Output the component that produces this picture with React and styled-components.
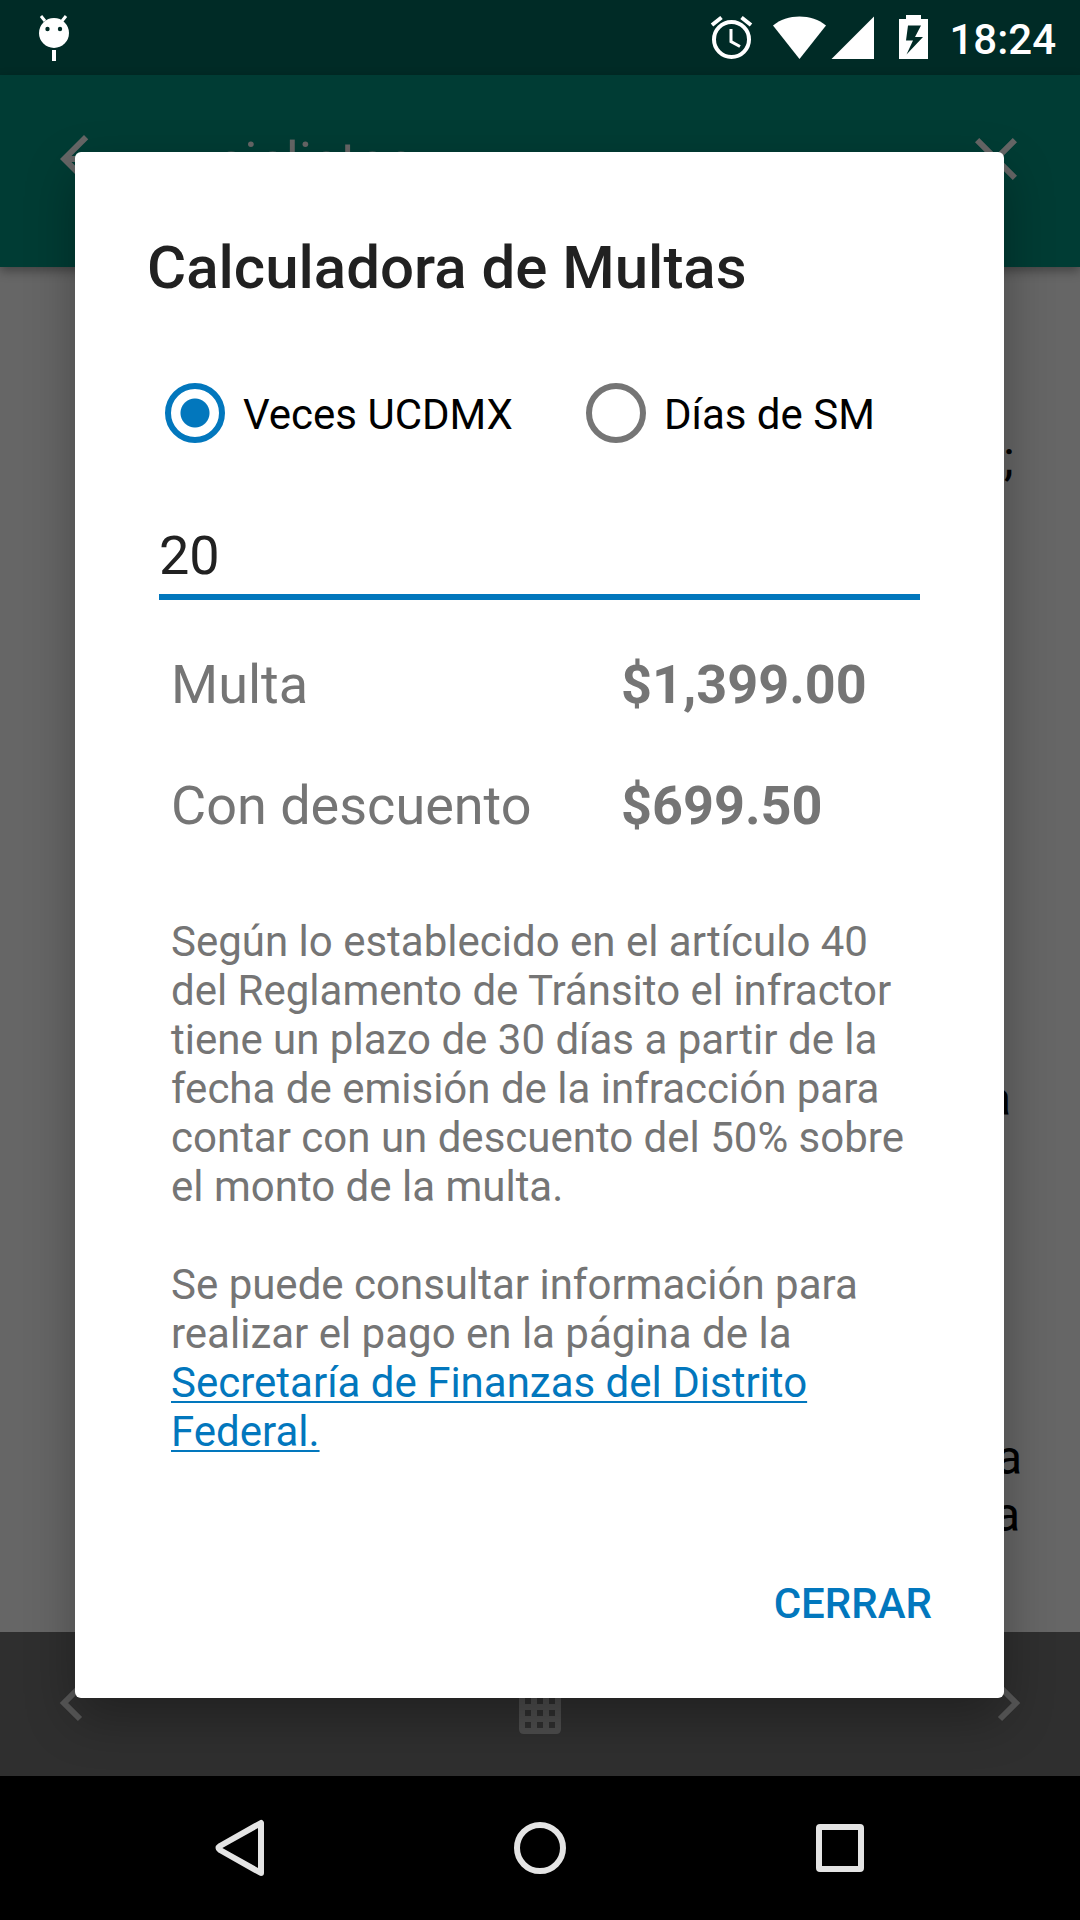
import React, { useState } from "react";
import styled, { createGlobalStyle } from "styled-components";

const Global = createGlobalStyle`
  *, *::before, *::after { box-sizing: border-box; }
  body { margin: 0; background: #000; }
  button, input { font: inherit; }
`;

const Screen = styled.div`
  position: relative;
  min-height: 100vh;
  display: flex;
  flex-direction: column;
  font-family: Roboto, "Noto Sans", sans-serif;
  font-size: 42px;
  line-height: 49px;
  color: #000;
`;

const StatusBar = styled.header`
  height: 75px;
  padding: 0 24px 0 36px;
  display: flex;
  align-items: center;
  justify-content: space-between;
  background: #002b26;
  color: #fff;
`;

const StatusIcons = styled.div`
  display: flex;
  align-items: center;
`;

const Glyph = styled.svg`
  display: block;
  flex: none;
`;

const Clock = styled.time`
  margin-left: 19px;
  padding-top: 4px;
  font-weight: 500;
`;

const AppBar = styled.div`
  height: 192px;
  padding: 0 48px;
  display: flex;
  align-items: center;
  gap: 96px;
  background: #003c34;
  box-shadow: 0 4px 10px rgba(0, 0, 0, 0.35);
  z-index: 1;
`;

const BarTitle = styled.h1`
  flex: 1;
  margin: 0;
  padding-bottom: 18px;
  font-size: 54px;
  font-weight: 400;
  line-height: 64px;
  color: #666;
`;

const IconButton = styled.button`
  padding: 0;
  border: 0;
  display: flex;
  background: none;
  color: #666;
`;

const BarButton = styled(IconButton)`
  margin-bottom: 24px;
`;

const Article = styled.main`
  flex: 1;
  padding: 163px 58px 0;
  background: #666;
  text-align: right;
  font-size: 48px;
  line-height: 57px;
`;

const Passage = styled.p`
  margin: 0 ${(p) => p.$inset}px ${(p) => p.$after}px 0;
`;

const BottomBar = styled.nav`
  height: 144px;
  padding: 0 46px;
  display: flex;
  align-items: center;
  justify-content: space-between;
  background: #2f2f2f;
`;

const SystemNav = styled.nav`
  height: 144px;
  padding: 0 90px;
  display: grid;
  grid-template-columns: repeat(3, 1fr);
  place-items: center;
  background: #000;
`;

const SystemButton = styled(IconButton)`
  color: #e4e4e4;
`;

const Dialog = styled.section`
  position: absolute;
  top: 152px;
  left: 75px;
  right: 76px;
  padding: 84px 72px 45px;
  display: flex;
  flex-direction: column;
  border-radius: 6px;
  background: #fff;
  box-shadow: 0 20px 50px rgba(0, 0, 0, 0.3);
  z-index: 2;
`;

const Title = styled.h2`
  margin: 0;
  font-size: 60px;
  font-weight: 500;
  line-height: 64px;
  color: #212121;
`;

const Form = styled.form`
  padding: 72px 12px 0;
  display: flex;
  flex-direction: column;
`;

const Choices = styled.div`
  padding-left: 6px;
  display: flex;
  gap: 73px;
`;

const Choice = styled.label`
  height: 84px;
  display: flex;
  align-items: center;
  gap: 18px;
`;

const Radio = styled.input`
  appearance: none;
  width: 60px;
  height: 60px;
  margin: 0 0 2px;
  border: 6px solid #757575;
  border-radius: 50%;

  &:checked {
    border-color: #0277bd;
    background: radial-gradient(circle, #0277bd 14px, transparent 15px);
  }
`;

const Amount = styled.input`
  width: 100%;
  height: 72px;
  margin-top: 72px;
  padding: 0 0 12px;
  border: 0;
  border-bottom: 6px solid #0277bd;
  border-radius: 0;
  outline: 0;
  background: none;
  font-size: 54px;
  color: #212121;
`;

const Results = styled.dl`
  margin: 0;
  padding: 53px 12px 0;
  display: grid;
  grid-template-columns: 450px 1fr;
  row-gap: 57px;
  font-size: 54px;
  line-height: 64px;
  color: #757575;
`;

const Term = styled.dt``;

const Value = styled.dd`
  margin: 0;
  font-weight: 700;
`;

const Note = styled.p`
  margin: 0;
  padding: ${(p) => (p.$first ? 79 : 49)}px 24px 0;
  color: #757575;
`;

const NoteLink = styled.a`
  color: #0277bd;
  text-decoration-thickness: 2px;
  text-underline-offset: 4px;
`;

const Actions = styled.div`
  padding-top: 97px;
  display: flex;
  justify-content: flex-end;
`;

const CloseButton = styled.button`
  height: 100px;
  padding: 0;
  border: 0;
  background: none;
  font-weight: 500;
  color: #0277bd;
`;

function Android() {
  return (
    <Glyph width="36" height="50" viewBox="0 -1 36 50" aria-hidden="true">
      <path d="M5 2l4 5M30 2l-4 5" stroke="#fff" strokeWidth="3" />
      <circle cx="18" cy="19" r="15" fill="#fff" />
      <circle cx="11.500" cy="15" r="2.200" fill="#002b26" />
      <circle cx="24" cy="15" r="2.200" fill="#002b26" />
      <path d="M16 36h4v11h-4z" fill="#fff" />
    </Glyph>
  );
}

function StatusGlyphs() {
  return (
    <Glyph width="220" height="46" viewBox="710 15 220 46" aria-hidden="true">
      <g fill="none" stroke="#fff">
        <circle cx="731.500" cy="39.500" r="17.500" strokeWidth="4" />
        <path d="M731 29v12.500l9 5" strokeWidth="3" />
        <path d="M712 25l9.500-7.500M751 25l-9.500-7.500" strokeWidth="4" />
      </g>
      <g fill="#fff">
        <path d="M773 25.500c14-12 39-12 53 0L799.500 59z" />
        <path d="M874 16.500V59h-42.500z" />
        <path
          fillRule="evenodd"
          d="M899 19h7v-4h15v4h7v40h-29zM908 25.500l-2 15h7l-6.500 14L923 37h-8l6-11.500z"
        />
      </g>
    </Glyph>
  );
}

export default function App() {
  const [unit, setUnit] = useState("ucdmx");
  const [amount, setAmount] = useState("20");

  return (
    <>
      <Global />
      <Screen>
        <StatusBar>
          <Android />
          <StatusIcons>
            <StatusGlyphs />
            <Clock>18:24</Clock>
          </StatusIcons>
        </StatusBar>

        <AppBar>
          <BarButton aria-label="Atrás">
            <Glyph width="72" height="72" viewBox="0 0 24 24">
              <path d="M20 11H7.830l5.590-5.590L12 4l-8 8 8 8 1.410-1.410L7.830 13H20v-2z" fill="currentColor" />
            </Glyph>
          </BarButton>
          <BarTitle>ciclistas</BarTitle>
          <BarButton aria-label="Cerrar búsqueda">
            <Glyph width="72" height="72" viewBox="0 0 24 24">
              <path d="M19 6.410L17.590 5 12 10.590 6.410 5 5 6.410 10.590 12 5 17.590 6.410 19 12 13.410 17.590 19 19 17.590 13.410 12z" fill="currentColor" />
            </Glyph>
          </BarButton>
        </AppBar>

        <Article>
          <Passage $inset={8} $after={583}>;</Passage>
          <Passage $inset={11} $after={302}>a</Passage>
          <Passage $inset={0} $after={0}>a</Passage>
          <Passage $inset={2} $after={0}>a</Passage>
        </Article>

        <BottomBar>
          <IconButton aria-label="Anterior">
            <Glyph width="48" height="72" viewBox="0 0 48 72">
              <path d="M34 19L18 35l16 16" fill="none" stroke="#585858" strokeWidth="6" />
            </Glyph>
          </IconButton>
          <IconButton aria-label="Calculadora">
            <Glyph width="42" height="60" viewBox="0 0 42 60">
              <path
                fill="#4d4d4d"
                fillRule="evenodd"
                d="M5 0h32q5 0 5 5v50q0 5-5 5H5q-5 0-5-5V5q0-5 5-5zM6 24v6h6v-6zM18 24v6h6v-6zM30 24v6h6v-6zM6 36v6h6v-6zM18 36v6h6v-6zM30 36v6h6v-6zM6 48v6h6v-6zM18 48v6h6v-6zM30 48v6h6v-6z"
              />
            </Glyph>
          </IconButton>
          <IconButton aria-label="Siguiente">
            <Glyph width="48" height="72" viewBox="0 0 48 72">
              <path d="M14 19l16 16-16 16" fill="none" stroke="#585858" strokeWidth="6" />
            </Glyph>
          </IconButton>
        </BottomBar>

        <SystemNav>
          <SystemButton aria-label="Volver">
            <Glyph width="60" height="60" viewBox="0 0 60 60">
              <path d="M51 5v50L10 32q-3-2 0-4z" fill="none" stroke="currentColor" strokeWidth="6" strokeLinejoin="round" />
            </Glyph>
          </SystemButton>
          <SystemButton aria-label="Inicio">
            <Glyph width="60" height="60" viewBox="0 0 60 60">
              <circle cx="30" cy="30" r="23" fill="none" stroke="currentColor" strokeWidth="6" />
            </Glyph>
          </SystemButton>
          <SystemButton aria-label="Recientes">
            <Glyph width="60" height="60" viewBox="0 0 60 60">
              <rect x="9" y="9" width="42" height="42" rx="1" fill="none" stroke="currentColor" strokeWidth="6" />
            </Glyph>
          </SystemButton>
        </SystemNav>

        <Dialog role="dialog" aria-labelledby="calc-title">
          <Title id="calc-title">Calculadora de Multas</Title>
          <Form onSubmit={(e) => e.preventDefault()}>
            <Choices>
              <Choice>
                <Radio type="radio" name="unit" checked={unit === "ucdmx"} onChange={() => setUnit("ucdmx")} />
                Veces UCDMX
              </Choice>
              <Choice>
                <Radio type="radio" name="unit" checked={unit === "sm"} onChange={() => setUnit("sm")} />
                Días de SM
              </Choice>
            </Choices>
            <Amount aria-label="Cantidad" inputMode="numeric" value={amount} onChange={(e) => setAmount(e.target.value)} />
            <Results>
              <Term>Multa</Term>
              <Value>$1,399.00</Value>
              <Term>Con descuento</Term>
              <Value>$699.50</Value>
            </Results>
          </Form>
          <Note $first>
            Según lo establecido en el artículo 40 del Reglamento de Tránsito el infractor tiene un plazo de 30 días a
            partir de la fecha de emisión de la infracción para contar con un descuento del 50% sobre el monto de la
            multa.
          </Note>
          <Note>
            Se puede consultar información para realizar el pago en la página de la{" "}
            <NoteLink href="#finanzas">Secretaría de Finanzas del Distrito Federal.</NoteLink>
          </Note>
          <Actions>
            <CloseButton type="button">CERRAR</CloseButton>
          </Actions>
        </Dialog>
      </Screen>
    </>
  );
}
